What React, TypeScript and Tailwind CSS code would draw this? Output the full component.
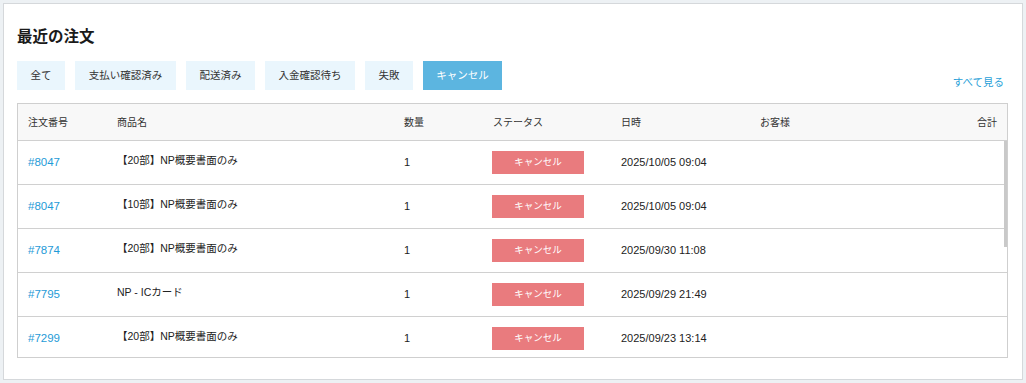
import React from "react";

const font = { fontFamily: '"Liberation Sans", "Noto Sans CJK JP", sans-serif' };

const filters = [
  { label: "全て", w: "w-[48px]" },
  { label: "支払い確認済み", w: "w-[101px]" },
  { label: "配送済み", w: "w-[69px]" },
  { label: "入金確認待ち", w: "w-[90px]" },
  { label: "失敗", w: "w-[48px]" },
  { label: "キャンセル", w: "w-[79px]" },
];

const rows = [
  { id: "#8047", name: "【20部】NP概要書面のみ", qty: "1", date: "2025/10/05 09:04" },
  { id: "#8047", name: "【10部】NP概要書面のみ", qty: "1", date: "2025/10/05 09:04" },
  { id: "#7874", name: "【20部】NP概要書面のみ", qty: "1", date: "2025/09/30 11:08" },
  { id: "#7795", name: "NP - ICカード", qty: "1", date: "2025/09/29 21:49" },
  { id: "#7299", name: "【20部】NP概要書面のみ", qty: "1", date: "2025/09/23 13:14" },
];

const cols = "grid grid-cols-[89px_287px_89px_128px_139px_1fr_80px]";

export default function App() {
  return (
    <div style={font} className="min-h-[383px] bg-[#edf1f4] p-[3px]">
      <div className="border border-[#d5d8db] bg-white pl-[13px] pr-[14px] pt-[22px] pb-[21px]">
        <h2 className="text-[15.5px] leading-[22px] font-bold text-[#1a1a1a] mb-[13px]">最近の注文</h2>
        <div className="flex items-end justify-between mb-[13px]">
          <div className="flex gap-[10px]">
            {filters.map((f) => (
              <button
                key={f.label}
                className={
                  f.label === "キャンセル"
                    ? `${f.w} h-[29px] whitespace-nowrap text-center text-[10.5px] text-white bg-[#5cb5e0]`
                    : `${f.w} h-[29px] whitespace-nowrap text-center text-[10.5px] text-[#333] bg-[#eaf6fd]`
                }
              >
                {f.label}
              </button>
            ))}
          </div>
          <a className="text-[10.5px] leading-[16px] text-[#2a9fd8] mr-[4px]">すべて見る</a>
        </div>
        <div className="border border-[#cfcfcf]">
          <div className={`${cols} h-[37px] items-center bg-[#f8f8f8] border-b border-[#d0d0d0] text-[10px] text-[#333]`}>
            <div className="pl-[10px]">注文番号</div>
            <div className="pl-[10px]">商品名</div>
            <div className="pl-[10px]">数量</div>
            <div className="pl-[10px]">ステータス</div>
            <div className="pl-[10px]">日時</div>
            <div className="pl-[10px]">お客様</div>
            <div className="pr-[10px] text-right">合計</div>
          </div>
          <div className="relative h-[216px] overflow-hidden">
            {rows.map((r, i) => (
              <div key={i} className={`${cols} h-[44px] items-center border-b border-[#d0d0d0] text-[#222]`}>
                <div className="pl-[10px] text-[11.5px] text-[#1f9bd7]">{r.id}</div>
                <div className="pl-[10px] pb-[4px] text-[10.5px]">{r.name}</div>
                <div className="pl-[10px] text-[11px]">{r.qty}</div>
                <div className="pl-[9px]">
                  <div className="w-[92px] h-[23px] flex items-center justify-center bg-[#e97b7e] text-white text-[9.5px]">
                    キャンセル
                  </div>
                </div>
                <div className="pl-[10px] text-[11px]">{r.date}</div>
                <div />
                <div />
              </div>
            ))}
            <div className="absolute right-0 top-0 h-[106px] w-[3px] bg-[#c9c9c9]" />
          </div>
        </div>
      </div>
    </div>
  );
}
